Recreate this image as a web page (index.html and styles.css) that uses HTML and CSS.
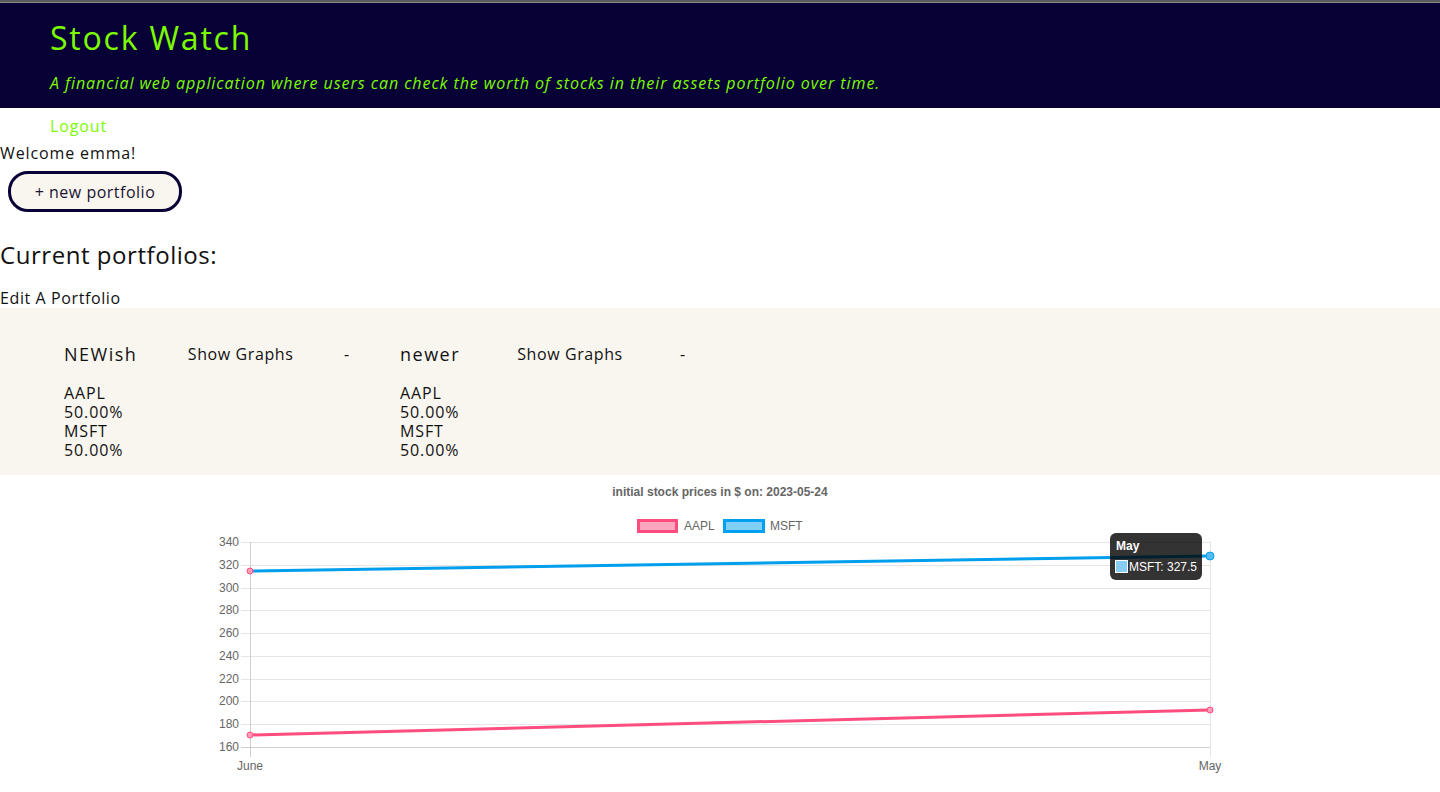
FILE: index.html
```html
<!DOCTYPE html>
<html lang="en">
<head>
<meta charset="utf-8">
<title>Stock Watch</title>
<link rel="stylesheet" href="styles.css">
</head>
<body>
<div class="topline"></div>
<header class="site-header">
  <h1 class="title">Stock Watch</h1>
  <p class="subtitle">A financial web application where users can check the worth of stocks in their assets portfolio over time.</p>
</header>
<nav class="nav"><a class="logout" href="#">Logout</a></nav>
<p class="welcome">Welcome emma!</p>
<button class="new-btn">+ new portfolio</button>
<h2 class="current">Current portfolios:</h2>
<p class="edit">Edit A Portfolio</p>
<section class="portfolios">
  <div class="card">
    <div class="card-head">
      <span class="card-name">NEWish</span>
      <span class="card-link">Show Graphs</span>
      <span class="card-dash">-</span>
    </div>
    <ul class="holdings">
      <li>AAPL</li><li>50.00%</li><li>MSFT</li><li>50.00%</li>
    </ul>
  </div>
  <div class="card">
    <div class="card-head">
      <span class="card-name">newer</span>
      <span class="card-link">Show Graphs</span>
      <span class="card-dash">-</span>
    </div>
    <ul class="holdings">
      <li>AAPL</li><li>50.00%</li><li>MSFT</li><li>50.00%</li>
    </ul>
  </div>
</section>
<div class="chart-wrap">
<svg class="chart" width="1440" height="317" viewBox="0 475 1440 317" xmlns="http://www.w3.org/2000/svg">
  <text x="720" y="496" text-anchor="middle" class="c-title">initial stock prices in $ on: 2023-05-24</text>
  <!-- legend -->
  <rect x="638.5" y="520.5" width="38" height="11" fill="rgba(255,77,128,0.5)" stroke="#ff4d80" stroke-width="3"/>
  <text x="684" y="530" class="c-legend">AAPL</text>
  <rect x="724.5" y="520.5" width="39" height="11" fill="rgba(0,160,240,0.5)" stroke="#00a0f0" stroke-width="3"/>
  <text x="770" y="530" class="c-legend">MSFT</text>
  <!-- grid -->
  <g stroke="#e5e5e5" stroke-width="1">
    <line x1="241" y1="542.5" x2="1210" y2="542.5"/>
    <line x1="241" y1="565.5" x2="1210" y2="565.5"/>
    <line x1="241" y1="588.5" x2="1210" y2="588.5"/>
    <line x1="241" y1="610.5" x2="1210" y2="610.5"/>
    <line x1="241" y1="633.5" x2="1210" y2="633.5"/>
    <line x1="241" y1="656.5" x2="1210" y2="656.5"/>
    <line x1="241" y1="679.5" x2="1210" y2="679.5"/>
    <line x1="241" y1="701.5" x2="1210" y2="701.5"/>
    <line x1="241" y1="724.5" x2="1210" y2="724.5"/>
    <line x1="1210.5" y1="542" x2="1210.5" y2="757"/>
  </g>
  <line x1="241" y1="747.5" x2="1210" y2="747.5" stroke="#cfcfcf"/>
  <line x1="250.5" y1="542" x2="250.5" y2="757" stroke="#cfcfcf"/>
  <g class="c-tick" text-anchor="end">
    <text x="239" y="546">340</text>
    <text x="239" y="569">320</text>
    <text x="239" y="592">300</text>
    <text x="239" y="614">280</text>
    <text x="239" y="637">260</text>
    <text x="239" y="660">240</text>
    <text x="239" y="683">220</text>
    <text x="239" y="705">200</text>
    <text x="239" y="728">180</text>
    <text x="239" y="751">160</text>
  </g>
  <g class="c-tick" text-anchor="middle">
    <text x="250" y="770">June</text>
    <text x="1210" y="770">May</text>
  </g>
  <!-- lines -->
  <line x1="250" y1="735" x2="1210" y2="710" stroke="#ff4d80" stroke-width="3"/>
  <line x1="250" y1="571" x2="1210" y2="556" stroke="#009fee" stroke-width="3"/>
  <circle cx="250" cy="735" r="3" fill="#ff9ab6" stroke="#ff4d80" stroke-width="1"/>
  <circle cx="1210" cy="710" r="3" fill="#ff9ab6" stroke="#ff4d80" stroke-width="1"/>
  <circle cx="250" cy="571" r="3" fill="#ff9ab6" stroke="#ff4d80" stroke-width="1"/>
  <circle cx="1210" cy="556" r="4" fill="#55b9f4" stroke="#009fee" stroke-width="1"/>
  <!-- tooltip -->
  <rect x="1110" y="533" width="92" height="47" rx="6" fill="rgba(0,0,0,0.8)"/>
  <text x="1116" y="550" class="c-tip-title">May</text>
  <rect x="1115.5" y="560.5" width="12" height="12" fill="#88cdf6" stroke="#ffffff" stroke-width="1"/>
  <text x="1129" y="571" class="c-tip">MSFT: 327.5</text>
</svg>
</div>
</body>
</html>
```

FILE: styles.css
```css
html, body {
  margin: 0;
  padding: 0;
  background: #ffffff;
}
body {
  font-family: "Open Sans", "DejaVu Sans", sans-serif;
  letter-spacing: 0.055em;
  color: #111111;
  font-size: 16px;
  width: 1440px;
  overflow: hidden;
}
.topline {
  height: 3px;
  background: linear-gradient(#5a5a5a 0, #5a5a5a 2px, #8a8a8a 2px);
}
.site-header {
  background: #070136;
  padding: 15px 0 15px 50px;
}
.title {
  margin: 0;
  font-size: 32px;
  line-height: 40px;
  font-weight: 400;
  color: #7cfc00;
  letter-spacing: 1.8px;
}
.subtitle {
  margin: 15px 0 0;
  font-size: 16px;
  line-height: 20px;
  font-style: italic;
  color: #7cfc00;
  letter-spacing: 0.94px;
}
.nav {
  padding: 8px 0 0 50px;
  line-height: 20px;
}
.logout {
  color: #7cfc00;
  text-decoration: none;
}
.welcome {
  margin: 7px 0 0;
  line-height: 20px;
}
.new-btn {
  display: block;
  margin: 8px 0 0 8px;
  width: 174px;
  height: 41px;
  border: 3px solid #070136;
  border-radius: 20px;
  background: #f9f6ef;
  color: #1a1433;
  font-family: "Open Sans", "DejaVu Sans", sans-serif;
  font-size: 16px;
  letter-spacing: 0.5px;
  padding: 0;
}
.current {
  margin: 29px 0 0;
  font-size: 24px;
  line-height: 28px;
  font-weight: 400;
  letter-spacing: 0.55px;
}
.edit {
  margin: 19px 0 0;
  line-height: 20px;
  letter-spacing: 0.6px;
}
.portfolios {
  background: #f9f6ef;
  display: flex;
  gap: 50px;
  padding: 35px 0 15px 64px;
}
.card {
  width: 286px;
}
.card-head {
  display: flex;
  justify-content: space-between;
  align-items: center;
  height: 22px;
}
.card-name {
  font-size: 18px;
  line-height: 22px;
  letter-spacing: 1.5px;
}
.card-link {
  font-size: 16px;
  letter-spacing: 0.6px;
}
.holdings {
  list-style: none;
  margin: 19px 0 0;
  padding: 0;
  line-height: 19px;
}
.chart-wrap {
  height: 317px;
}
.chart {
  display: block;
  letter-spacing: 0;
}
.c-title {
  font-family: "Liberation Sans", Arial, sans-serif;
  font-size: 12px;
  font-weight: 700;
  fill: #666666;
}
.c-legend, .c-tick {
  font-family: "Liberation Sans", Arial, sans-serif;
  font-size: 12px;
  fill: #666666;
}
.c-tip-title {
  font-family: "Liberation Sans", Arial, sans-serif;
  font-size: 12px;
  font-weight: 700;
  fill: #ffffff;
}
.c-tip {
  font-family: "Liberation Sans", Arial, sans-serif;
  font-size: 12px;
  fill: #ffffff;
}
```
